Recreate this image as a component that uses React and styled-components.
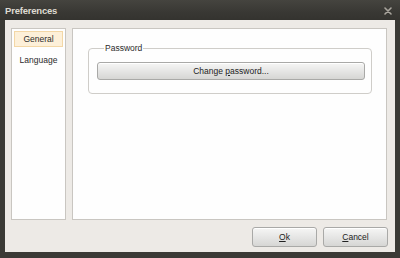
import React from 'react';
import styled, { createGlobalStyle } from 'styled-components';

const GlobalStyle = createGlobalStyle`
  html, body {
    margin: 0;
    padding: 0;
    background: #3a3935;
  }
  body {
    font-family: "Liberation Sans", Arial, sans-serif;
    font-size: 8.5px;
    color: #2b2b2b;
  }
`;

const StyledWindow = styled.div`
  width: 400px;
  height: 258px;
  display: flex;
  flex-direction: column;
  background: #3b3a36;
  box-sizing: border-box;
`;

const StyledTitleBar = styled.div`
  height: 20px;
  flex-shrink: 0;
  display: flex;
  align-items: center;
  justify-content: space-between;
  padding: 0 8px 0 5px;
  background: linear-gradient(#45443f, #393834 60%, #34332f);
  color: #dfdbd2;
  font-weight: bold;
  font-size: 9.5px;
  letter-spacing: -0.2px;
`;

const StyledClose = styled.svg`
  width: 8px;
  height: 8px;
  margin-top: 1px;
`;

const StyledBody = styled.div`
  flex: 1;
  margin: 0 5px 6px 5px;
  background: #edeae6;
  display: flex;
  flex-direction: column;
  gap: 7px;
  padding: 8px 8px 5px 6px;
`;

const StyledPanels = styled.div`
  flex: 1;
  display: flex;
  gap: 6px;
`;

const StyledPanel = styled.div`
  box-sizing: border-box;
  background: #fefefe;
  border: 1px solid #c9c6c1;
  width: ${(p) => (p.$width ? `${p.$width}px` : 'auto')};
  flex: ${(p) => (p.$width ? '0 0 auto' : '1')};
`;

const StyledList = styled(StyledPanel)`
  display: flex;
  flex-direction: column;
  gap: 5px;
  padding: 2px;
`;

const StyledListItem = styled.div`
  height: 16px;
  display: flex;
  align-items: center;
  justify-content: center;
  box-sizing: border-box;
  border: 1px solid ${(p) => (p.$active ? '#f3d7a6' : 'transparent')};
  background: ${(p) => (p.$active ? '#fdf0d9' : 'transparent')};
`;

const StyledPage = styled(StyledPanel)`
  padding: 14px 14px 0 15px;
`;

const StyledGroup = styled.fieldset`
  margin: 0;
  border: 1px solid #cfcdc9;
  border-radius: 4px;
  padding: 9px 6px 13px 8px;
`;

const StyledLegend = styled.legend`
  padding: 0 1px;
  margin-left: 7px;
  line-height: 10px;
`;

const StyledButton = styled.button`
  box-sizing: border-box;
  width: ${(p) => (p.$wide ? '100%' : '65px')};
  height: ${(p) => (p.$wide ? '18px' : '20px')};
  display: block;
  padding: 0;
  font-family: "Liberation Sans", Arial, sans-serif;
  font-size: 8.5px;
  color: #222;
  border: 1px solid #a9a9a7;
  border-radius: 3px;
  background: linear-gradient(#f6f6f5, #e6e6e5 50%, #d6d6d4);
  box-shadow: inset 0 1px 0 #fff;

  & u {
    text-decoration-thickness: 1px;
    text-underline-offset: 1px;
  }
`;

const StyledFooter = styled.div`
  display: flex;
  justify-content: flex-end;
  gap: 6px;
  margin-right: -1px;
`;

const App = () => {
    return (
        <StyledWindow>
            <GlobalStyle />
            <StyledTitleBar>
                <span>Preferences</span>
                <StyledClose viewBox="0 0 8 8">
                    <path d="M1 1 L7 7 M7 1 L1 7" stroke="#a9a59d" strokeWidth="1.6" strokeLinecap="round" />
                </StyledClose>
            </StyledTitleBar>
            <StyledBody>
                <StyledPanels>
                    <StyledList $width={55}>
                        <StyledListItem $active>General</StyledListItem>
                        <StyledListItem>Language</StyledListItem>
                    </StyledList>
                    <StyledPage>
                        <StyledGroup>
                            <StyledLegend>Password</StyledLegend>
                            <StyledButton $wide>Change <u>p</u>assword...</StyledButton>
                        </StyledGroup>
                    </StyledPage>
                </StyledPanels>
                <StyledFooter>
                    <StyledButton><u>O</u>k</StyledButton>
                    <StyledButton><u>C</u>ancel</StyledButton>
                </StyledFooter>
            </StyledBody>
        </StyledWindow>
    );
};

export default App;
